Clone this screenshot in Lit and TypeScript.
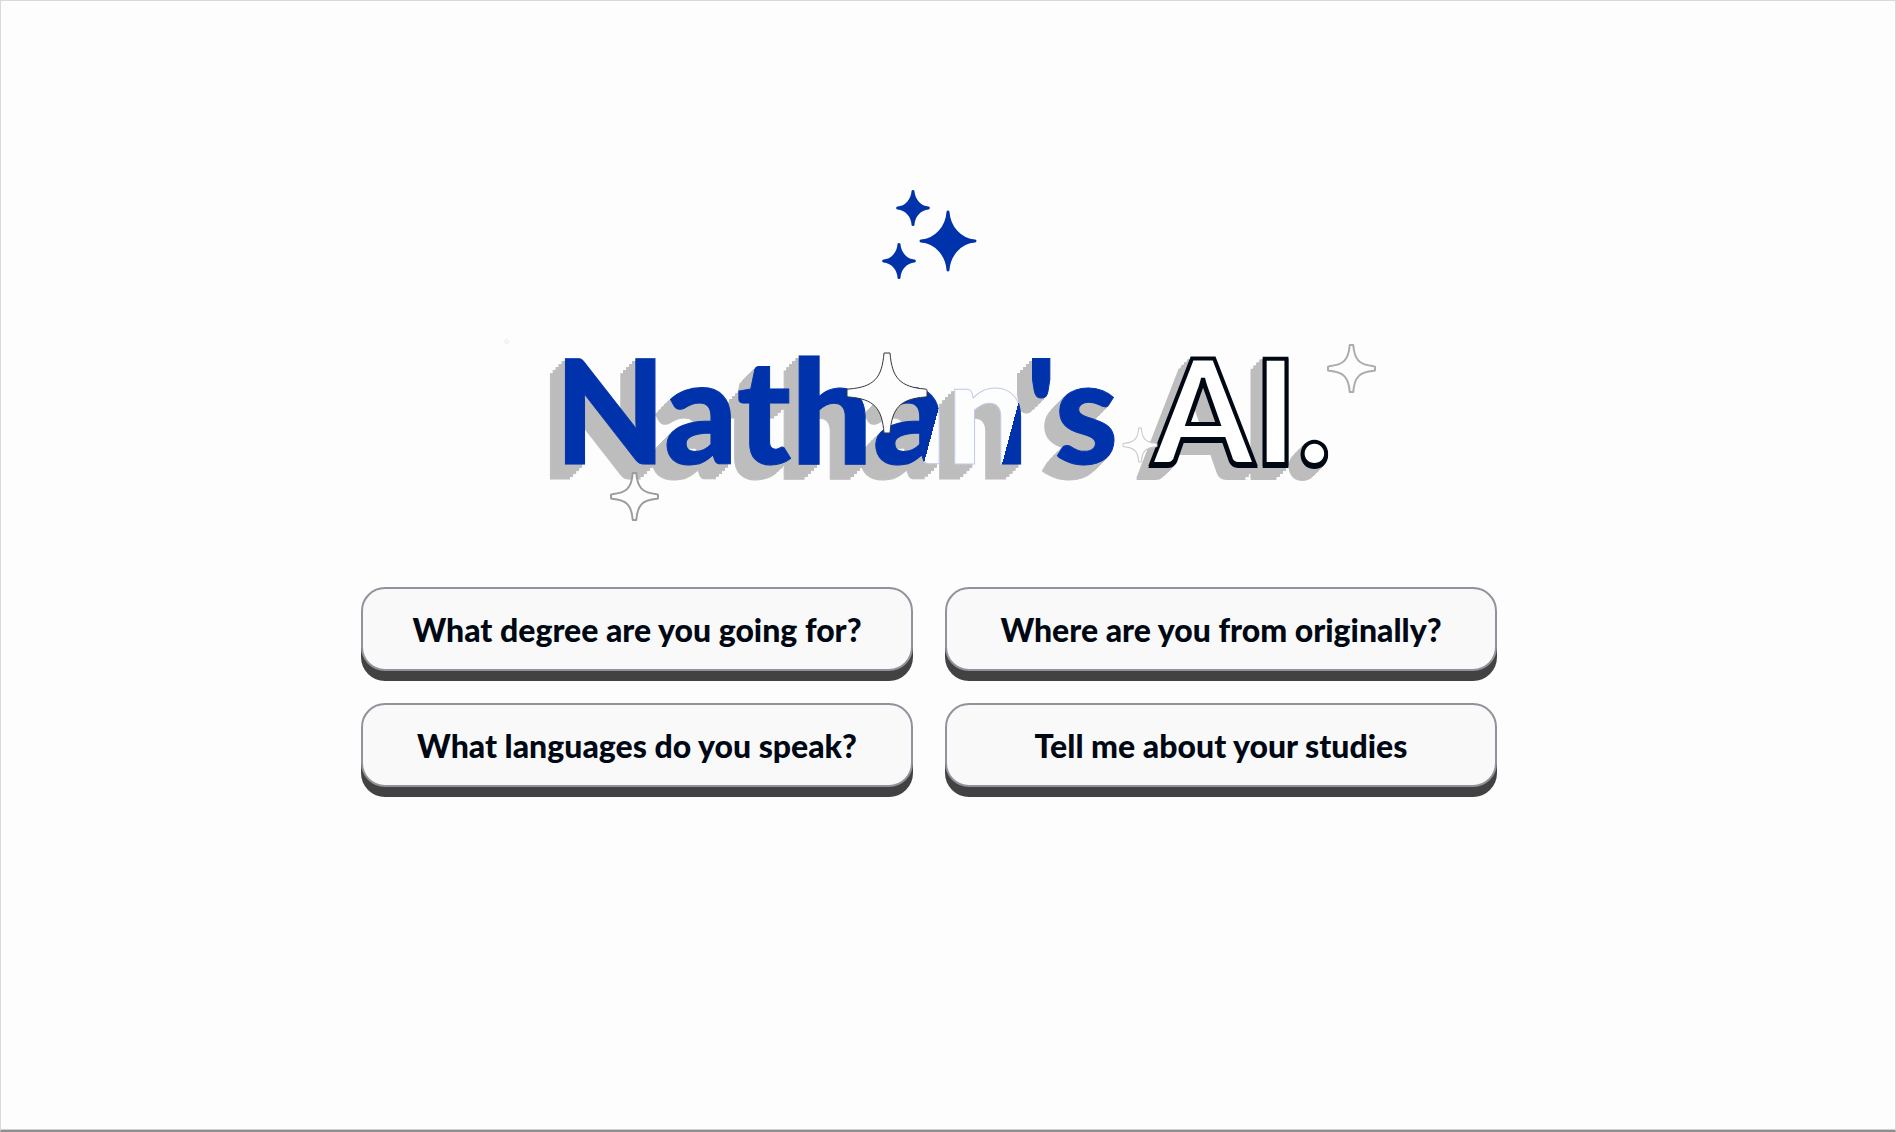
import { LitElement, html, css, svg } from "lit";
import { customElement, property } from "lit/decorators.js";

/** Four-pointed outlined star with blunt tips, used around the title. */
const STAR_OUTLINE =
  "M-3-40H3C5-15 13-6 38-4Q40-4 40-3V3Q40 4 38 4C13 6 5 15 3 40H-3C-5 15-13 6-38 4Q-40 4-40 3V-3Q-40-4-38-4C-13-6-5-15-3-40Z";

@customElement("outline-star")
class OutlineStar extends LitElement {
  static styles = css`
    :host { display: block; }
    svg { display: block; width: 100%; height: 100%; overflow: visible; }
    path {
      fill: #fdfdfd;
      stroke: currentColor;
      stroke-width: var(--weight, 1px);
      stroke-linejoin: round;
      vector-effect: non-scaling-stroke;
    }
  `;

  render() {
    return html`<svg viewBox="-40 -40 80 80" aria-hidden="true">
      <path d=${STAR_OUTLINE}></path>
    </svg>`;
  }
}

@customElement("prompt-button")
class PromptButton extends LitElement {
  @property() label = "";

  static styles = css`
    :host { display: block; }
    button {
      display: block;
      width: 100%;
      padding: 21px 24px 19px;
      border: 2px solid #92929c;
      border-radius: 24px;
      background: #f9f9f9;
      box-shadow: 0 10px 0 #424242;
      color: #000814;
      font: 900 32px/40px Lato, "Liberation Sans", sans-serif;
      text-align: center;
      cursor: pointer;
    }
  `;

  render() {
    return html`<button type="button">${this.label}</button>`;
  }
}

@customElement("app-root")
class AppRoot extends LitElement {
  private prompts = [
    "What degree are you going for?",
    "Where are you from originally?",
    "What languages do you speak?",
    "Tell me about your studies",
  ];

  static styles = css`
    :host { display: block; }
    * { box-sizing: border-box; }
    .page {
      display: flex;
      flex-direction: column;
      align-items: center;
      min-height: 100vh;
      padding: 189px 38px 48px 0;
      background: #fdfdfd;
      border: 1px solid #d8d8d8;
      border-bottom: 2px solid #8e8e8e;
      box-shadow: inset 0 -1px 0 #d0d0d0;
      font-family: Lato, "Liberation Sans", sans-serif;
    }
    .sparkles { display: block; width: 96px; height: 90px; }
    .sparkles path { fill: #0033ab; stroke: #0033ab; stroke-linejoin: round; }
    .title-wrap { position: relative; margin-top: 57px; padding-left: 28px; }
    .title {
      margin: 0;
      font-size: 144px;
      font-weight: 900;
      line-height: 144px;
      white-space: nowrap;
    }
    .name {
      display: inline-block;
      color: transparent;
      background: linear-gradient(105deg, #0033ab 67%, #fdfdfd 67% 80%, #0033ab 80%);
      -webkit-background-clip: text;
      background-clip: text;
      -webkit-text-stroke: 1px rgba(0, 51, 171, 0.25);
      filter: drop-shadow(-3px 3px 0 #bdbdbd) drop-shadow(-3px 3px 0 #bdbdbd)
        drop-shadow(-3px 3px 0 #bdbdbd) drop-shadow(-3px 3px 0 #bdbdbd)
        drop-shadow(-3px 3px 0 #bdbdbd);
    }
    .ai {
      display: inline-block;
      color: #fff;
      -webkit-text-stroke: 4px #000814;
      filter: drop-shadow(0 2px 0 #000814) drop-shadow(-3px 3px 0 #bdbdbd)
        drop-shadow(-3px 3px 0 #bdbdbd) drop-shadow(-3px 3px 0 #bdbdbd)
        drop-shadow(-3px 3px 0 #bdbdbd);
    }
    outline-star { position: absolute; }
    .star-center { left: 321px; top: 16px; width: 80px; height: 80px; color: #33363c; }
    .star-low { left: 85px; top: 136px; width: 47px; height: 47px; color: #9c9c9f; --weight: 2px; }
    .star-high { right: -43px; top: 8px; width: 47px; height: 47px; color: #acacb0; --weight: 2px; }
    .star-faint { right: 175px; top: 91px; width: 34px; height: 34px; color: #c6c6c8; }
    .star-speck { left: -22px; top: 2px; width: 5px; height: 5px; color: #ececec; }
    .prompts {
      display: grid;
      grid-template-columns: repeat(2, minmax(0, 1fr));
      gap: 32px;
      width: 100%;
      max-width: 1136px;
      margin-top: 106px;
    }
  `;

  private sparkle(x: number, y: number, scale: number) {
    return svg`<path transform="translate(${x} ${y}) scale(${scale})" stroke-width=${3 / scale}
      d="M0-29C1-14 12-1 27 0C12 1 1 14 0 29C-1 14-12 1-27 0C-12-1-1-14 0-29Z"></path>`;
  }

  render() {
    return html`
      <main class="page">
        <svg class="sparkles" viewBox="0 0 96 90" aria-hidden="true">
          ${this.sparkle(67, 51, 1)} ${this.sparkle(32, 18, 0.57)} ${this.sparkle(18, 71, 0.57)}
        </svg>
        <div class="title-wrap">
          <h1 class="title"><span class="name">Nathan's</span> <span class="ai">AI.</span></h1>
          <outline-star class="star-center"></outline-star>
          <outline-star class="star-low"></outline-star>
          <outline-star class="star-high"></outline-star>
          <outline-star class="star-faint"></outline-star>
          <outline-star class="star-speck"></outline-star>
        </div>
        <div class="prompts">
          ${this.prompts.map((p) => html`<prompt-button .label=${p}></prompt-button>`)}
        </div>
      </main>
    `;
  }
}
